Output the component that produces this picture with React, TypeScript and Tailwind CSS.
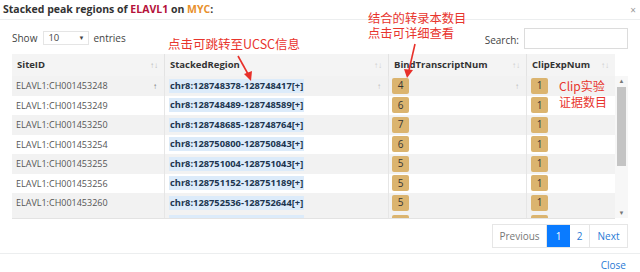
import React from "react";

const rows = [
  ["ELAVL1:CH001453248", "chr8:128748378-128748417[+]", "4", "1"],
  ["ELAVL1:CH001453249", "chr8:128748489-128748589[+]", "6", "1"],
  ["ELAVL1:CH001453250", "chr8:128748685-128748764[+]", "7", "1"],
  ["ELAVL1:CH001453254", "chr8:128750800-128750843[+]", "6", "1"],
  ["ELAVL1:CH001453255", "chr8:128751004-128751043[+]", "5", "1"],
  ["ELAVL1:CH001453256", "chr8:128751152-128751189[+]", "5", "1"],
  ["ELAVL1:CH001453260", "chr8:128752536-128752644[+]", "5", "1"],
];

const font = { fontFamily: '"Open Sans", "Noto Sans", sans-serif' };
const cjk = { fontFamily: '"Noto Sans CJK SC", "Open Sans", sans-serif' };

function Badge({ v }: { v: string }) {
  return (
    <span className="inline-flex h-[16px] w-[17px] items-center justify-center rounded-[2px] bg-[#dbb46f] text-[10px] text-[#333]">
      {v}
    </span>
  );
}

export default function App() {
  return (
    <div className="relative h-[272px] w-[640px] overflow-hidden bg-white text-[#333]" style={font}>
      {/* header */}
      <div className="flex h-[20px] items-center justify-between border-b border-[#eceeef] pl-[3px] pr-[4px]">
        <div className="text-[10.5px] font-bold leading-none text-[#333]">
          Stacked peak regions of <span className="text-[#b5123b]">ELAVL1</span> on{" "}
          <span className="text-[#e8902c]">MYC</span>:
        </div>
        <span className="text-[10px] leading-none text-[#999]">×</span>
      </div>

      {/* body */}
      <div className="px-[12px]">
        <div className="flex h-[34px] items-center justify-between pt-[2px]">
          <div className="flex items-center text-[10px] text-[#444]">
            <span>Show</span>
            <div className="ml-[6px] mr-[4px] flex h-[14px] w-[46px] items-center justify-between border border-[#e5e5e5] bg-white px-[4px] text-[9.5px]">
              <span>10</span>
              <span className="text-[6px]">▼</span>
            </div>
            <span>entries</span>
          </div>
          <div className="flex items-center text-[10px] text-[#444]">
            <span className="mr-[5px] mt-[4px]">Search:</span>
            <div className="h-[21px] w-[104px] border border-[#dcdcdc] bg-white" />
          </div>
        </div>

        {/* table */}
        <div className="flex">
          <div className="w-[603px] border-b border-[#e3e3e3]">
            <div className="flex h-[22px] items-center bg-[#f4f4f4] text-[9.5px] font-bold text-[#333]">
              <div className="relative flex h-full w-[153px] items-center border-r border-[#e3e3e3] pl-[5px]">
                SiteID<span className="absolute right-[6px] font-normal text-[8px] text-[#bbb]">↑↓</span>
              </div>
              <div className="relative flex h-full w-[224px] items-center border-r border-[#e3e3e3] pl-[5px]">
                StackedRegion<span className="absolute right-[6px] font-normal text-[8px] text-[#ccc]">↑↓</span>
              </div>
              <div className="relative flex h-full w-[138px] items-center border-r border-[#e3e3e3] pl-[5px]">
                BindTranscriptNum<span className="absolute right-[6px] font-normal text-[8px] text-[#ccc]">↑↓</span>
              </div>
              <div className="relative flex h-full flex-1 items-center pl-[5px]">
                ClipExpNum<span className="absolute right-[6px] font-normal text-[8px] text-[#ccc]">↑↓</span>
              </div>
            </div>
            <div className="h-[142px] overflow-hidden">
              {rows.map((r, i) => (
                <div
                  key={i}
                  className={`flex h-[19.5px] items-center text-[9px] ${i % 2 === 0 ? "bg-[#f2f2f2]" : "bg-white"}`}
                >
                  <div className="relative flex h-full w-[153px] items-center border-r border-[#e6e6e6] pl-[4px] text-[#555]">
                    {r[0]}
                    {i === 0 && <span className="absolute right-[7px] text-[8px] text-[#777]">↑</span>}
                  </div>
                  <div className="relative flex h-full w-[224px] items-center border-r border-[#e6e6e6] pl-[4px]">
                    <span className="bg-[#dcebfa] px-[1px] text-[9.3px] font-bold text-[#20354f]">{r[1]}</span>
                    {i === 0 && <span className="absolute right-[7px] text-[8px] text-[#bbb]">↑</span>}
                  </div>
                  <div className="relative flex h-full w-[138px] items-center border-r border-[#e6e6e6] pl-[3px]">
                    <Badge v={r[2]} />
                    {i === 0 && <span className="absolute right-[7px] text-[8px] text-[#bbb]">↑</span>}
                  </div>
                  <div className="flex h-full flex-1 items-center pl-[4px]">
                    <Badge v={r[3]} />
                  </div>
                </div>
              ))}
              {/* partially visible 8th row */}
              <div className="flex h-[19.5px] bg-[#f2f2f2]">
                <div className="h-full w-[153px] border-r border-[#e6e6e6]" />
                <div className="h-full w-[224px] border-r border-[#e6e6e6] pl-[4px] pt-[2px]">
                  <div className="h-[14px] w-[135px] bg-[#dcebfa]" />
                </div>
                <div className="h-full w-[138px] border-r border-[#e6e6e6] pl-[3px] pt-[2px]">
                  <div className="h-[16px] w-[17px] rounded-[2px] bg-[#dbb46f]" />
                </div>
                <div className="h-full flex-1 pl-[4px] pt-[2px]">
                  <div className="h-[16px] w-[17px] rounded-[2px] bg-[#dbb46f]" />
                </div>
              </div>
            </div>
          </div>
          {/* scrollbar */}
          <div className="mt-[22px] flex h-[142px] w-[13px] flex-col items-center bg-[#f7f7f7]">
            <span className="mt-[1px] text-[6px] leading-[8px] text-[#777]">▲</span>
            <div className="mt-[2px] h-[79px] w-[9px] bg-[#c4c4c4]" />
            <div className="flex-1" />
            <span className="mb-[1px] text-[6px] leading-[8px] text-[#777]">▼</span>
          </div>
        </div>

        {/* pagination */}
        <div className="flex h-[34px] items-center justify-end">
          <div className="flex h-[24px] border border-[#e6e6e6] text-[10px]">
            <div className="flex w-[54px] items-center justify-center border-r border-[#e6e6e6] text-[#777]">Previous</div>
            <div className="flex w-[23px] items-center justify-center bg-[#0a7bff] text-white">1</div>
            <div className="flex w-[20px] items-center justify-center border-r border-[#e6e6e6] text-[#2a7ad5]">2</div>
            <div className="flex w-[37px] items-center justify-center text-[#2a7ad5]">Next</div>
          </div>
        </div>
      </div>

      {/* footer */}
      <div className="border-t border-[#eceeef]">
        <div className="flex justify-end pr-[14px] pt-[5px] text-[10px] leading-[13px] text-[#2a7ad5]">Close</div>
      </div>

      {/* annotations */}
      <div className="absolute left-[168px] top-[36px] text-[12.5px] leading-[15px] text-[#e8352d]" style={cjk}>
        点击可跳转至UCSC信息
      </div>
      <div className="absolute left-[368px] top-[11px] text-[12.3px] leading-[15px] text-[#e8352d]" style={cjk}>
        结合的转录本数目
        <br />
        点击可详细查看
      </div>
      <div className="absolute left-[559px] top-[78px] text-[12px] leading-[16px] text-[#e8352d]" style={cjk}>
        Clip实验
        <br />
        证据数目
      </div>
      <svg className="absolute left-0 top-0" width="640" height="272">
        <line x1="238" y1="56" x2="248" y2="74" stroke="#e8302a" strokeWidth="1.6" />
        <polygon points="251,81 244,74 252,71" fill="#e8302a" />
        <line x1="415" y1="44" x2="409" y2="70" stroke="#e8302a" strokeWidth="1.6" />
        <polygon points="407,78 404,69 413,70" fill="#e8302a" />
      </svg>
    </div>
  );
}
